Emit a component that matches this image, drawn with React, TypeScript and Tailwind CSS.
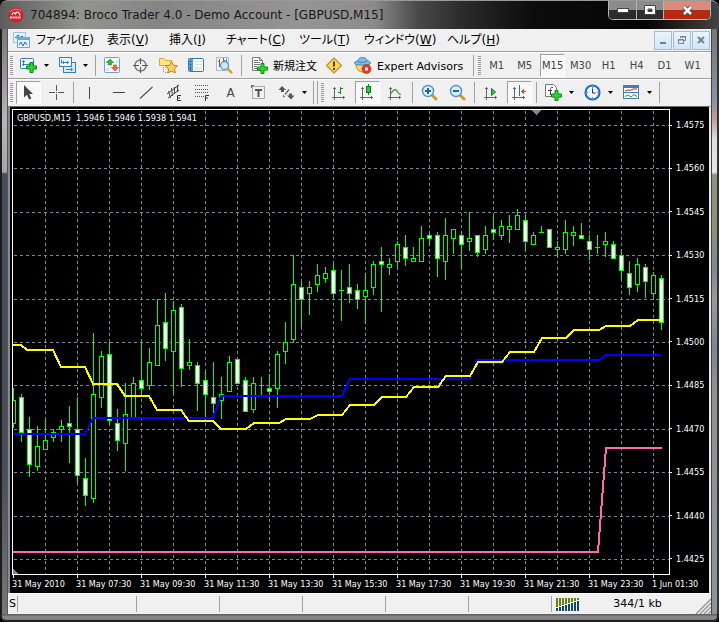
import type { ReactNode } from "react";

// [high, body top, body bottom, low, filled] in chart rows, one entry per 15 minutes
type Candle = [number, number, number, number, 0 | 1];

const candles: Candle[] = [
  [388, 400, 423, 427, 0], [394, 397, 432, 441, 1], [417, 429, 464, 476, 1], [426, 446, 466, 470, 0],
  [420, 440, 449, 449, 0], [429, 432, 437, 441, 0], [420, 426, 429, 441, 0], [406, 423, 426, 462, 1],
  [397, 429, 475, 482, 1], [458, 478, 495, 505, 1], [333, 394, 498, 502, 0], [351, 356, 397, 407, 0],
  [342, 354, 420, 424, 1], [409, 423, 440, 450, 1], [383, 414, 443, 470, 0], [377, 383, 417, 417, 0],
  [342, 380, 388, 395, 1], [348, 362, 385, 389, 0], [299, 325, 365, 365, 0], [293, 322, 348, 360, 1],
  [301, 310, 351, 392, 0], [304, 307, 368, 386, 1], [339, 362, 365, 369, 0], [362, 365, 383, 410, 1],
  [371, 380, 394, 417, 1], [362, 397, 403, 412, 1], [377, 394, 400, 418, 0], [356, 362, 391, 391, 0],
  [359, 359, 383, 383, 1], [377, 380, 411, 411, 1], [377, 383, 409, 412, 0], [377, 385, 385, 395, 0],
  [374, 388, 391, 400, 1], [351, 354, 388, 407, 0], [322, 342, 351, 363, 0], [255, 284, 339, 342, 0],
  [281, 287, 299, 326, 1], [281, 287, 293, 314, 0], [264, 275, 284, 291, 0], [267, 273, 278, 282, 0],
  [264, 270, 293, 297, 1], [270, 290, 290, 320, 0], [264, 287, 293, 302, 1], [284, 290, 299, 308, 1],
  [273, 290, 296, 323, 0], [261, 264, 287, 294, 0], [247, 261, 264, 311, 1], [258, 264, 267, 274, 0],
  [241, 244, 261, 268, 0], [235, 247, 258, 265, 1], [247, 258, 261, 261, 0], [226, 238, 261, 261, 0],
  [232, 235, 238, 245, 1], [232, 235, 258, 276, 1], [218, 235, 261, 279, 0], [229, 229, 238, 253, 0],
  [232, 235, 244, 268, 1], [212, 238, 241, 250, 0], [235, 235, 252, 256, 1], [226, 235, 249, 253, 0],
  [215, 229, 232, 239, 1], [220, 226, 235, 239, 0], [215, 226, 229, 242, 0], [209, 215, 229, 229, 0],
  [215, 220, 241, 250, 1], [232, 235, 244, 244, 0], [226, 232, 232, 232, 0], [229, 229, 247, 247, 1],
  [241, 247, 249, 256, 0], [220, 232, 249, 253, 0], [226, 232, 235, 245, 0], [223, 235, 238, 238, 1],
  [235, 241, 249, 259, 1], [235, 247, 247, 253, 0], [232, 241, 244, 256, 0], [241, 244, 258, 258, 1],
  [249, 255, 270, 279, 1], [261, 273, 287, 294, 1], [258, 264, 284, 291, 0], [264, 267, 281, 297, 1],
  [272, 275, 293, 297, 0], [275, 278, 322, 329, 1],
];

const gridRows = [125, 168, 212, 255, 299, 342, 385, 429, 472, 516, 559];
const gridCols = Array.from({ length: 20 }, (_, i) => 45 + i * 32);

const prices = ["1.4575", "1.4560", "1.4545", "1.4530", "1.4515", "1.4500", "1.4485", "1.4470", "1.4455", "1.4440", "1.4425"];
const times = [
  "31 May 2010", "31 May 07:30", "31 May 09:30", "31 May 11:30", "31 May 13:30", "31 May 15:30",
  "31 May 17:30", "31 May 19:30", "31 May 21:30", "31 May 23:30", "1 Jun 01:30",
];

const yellow =
  "13,345 21,345 27,350 53,350 61,367 85,367 93,384 117,384 125,396 149,396 157,410 181,410 189,421 213,421 221,429 246,429 254,423 279,423 286,419 310,419 318,415 342,415 350,405 374,405 382,397 406,397 414,387 438,387 446,376 470,376 478,362 502,362 510,352 534,352 542,338 566,338 574,330 599,330 606,326 630,326 638,320 661,320";
const blue =
  "13,434 85,434 93,418 213,418 221,396 342,396 350,379 470,379 477,360 599,360 606,355 661,355";
const pink = "13,552 598,552 606,448 662,448";

function Chart() {
  return (
    <svg viewBox="13 110 656 464" className="block w-full" shapeRendering="crispEdges" aria-label="GBPUSD candles">
      <g stroke="#778899" strokeWidth="1" strokeDasharray="3 3">
        {gridRows.map((y) => <path key={y} d={`M14 ${y + 0.5}H669`} />)}
        {gridCols.map((x) => <path key={x} d={`M${x + 0.5} 111V574`} />)}
      </g>
      {candles.map(([high, top, bottom, low, filled], i) => {
        const x = 13 + i * 8;
        return (
          <g key={x} stroke="#00ff00" strokeWidth="1">
            <path d={`M${x + 0.5} ${high}V${low + 1}`} />
            {top === bottom ? (
              <path d={`M${x - 2} ${top + 0.5}h5`} />
            ) : (
              <rect x={x - 1.5} y={top + 0.5} width="4" height={bottom - top} fill={filled ? "#ffffff" : "#000000"} />
            )}
          </g>
        );
      })}
      <g fill="none" strokeWidth="2" strokeLinejoin="round">
        <polyline points={blue} stroke="#0000ff" />
        <polyline points={yellow} stroke="#ffff00" />
        <polyline points={pink} stroke="#ff69b4" />
      </g>
      <path d="M532 110h9l-4.500 5z" fill="#778899" />
      <path d="M13 569v5h5z" fill="#778899" />
    </svg>
  );
}

function Icon({ children, w = 17 }: { children: ReactNode; w?: number }) {
  return (
    <svg width={w} height="17" viewBox={`0 0 ${w} 17`} fill="none" className="shrink-0 overflow-visible" aria-hidden="true">
      {children}
    </svg>
  );
}

const Plus = ({ x, y }: { x: number; y: number }) => (
  <path
    transform={`translate(${x} ${y})`}
    d="M4 .5h3v3.500h3.500v3H7v3.500H4V7H.5V4H4z"
    fill="#2fd62f"
    stroke="#0b8a12"
  />
);

const Axes = () => (
  <path d="M3.500 3v13M1 13.500h13M2 4.500h3M12.500 12v3" stroke="#666" />
);

const icons = {
  chartLogo: (
    <Icon>
      <rect x=".5" y=".5" width="12" height="10" fill="#e4f2fd" stroke="#9cc4e4" />
      <path d="M2 5.500h2v-2h2v4h2v-3h2" stroke="#3778b0" />
      <rect x="4.500" y="5.500" width="12" height="10" fill="#e4f2fd" stroke="#6fa8d6" />
      <path d="M4.500 7h12" stroke="#6fa8d6" strokeWidth="2" />
      <path d="M6 13l2-3 2 4 2-4 2 3" stroke="#2a6ea8" />
    </Icon>
  ),
  newChart: (
    <Icon>
      <rect x=".5" y="1.500" width="13" height="10" rx="1" fill="#eef7fe" stroke="#3b7fb5" />
      <path d="M3.500 3v6M2 7.500h9M2 4.500h3M9.500 6v3" stroke="#4a7fa8" />
      <Plus x={6} y={5} />
    </Icon>
  ),
  profiles: (
    <Icon>
      <rect x="4.500" y="5.500" width="12" height="10" fill="#d7eafa" stroke="#3b7fb5" />
      <path d="M7 12.500h7M12.500 11v3" stroke="#4a7fa8" />
      <rect x=".5" y=".5" width="12" height="9" fill="#eef7fe" stroke="#3b7fb5" />
      <path d="M2.500 2.500v4M2 5.500h8M4.500 4v3M8.500 4v3" stroke="#4a7fa8" />
    </Icon>
  ),
  market: (
    <Icon>
      <rect x=".5" y=".5" width="15" height="15" rx="1" fill="#f4faff" stroke="#69a2d0" />
      <path d="M2 4.500h2M2 7.500h2M12 4.500h2M2 11.500h4M2 13.500h3" stroke="#c7ddee" />
      <path d="M6 2l3.500 3.500H7.500V8h-3V5.500h-2z" fill="#35b832" stroke="#168018" strokeWidth=".6" />
      <path d="M11 14l-3.500-3.500h2V8h3v2.500h2z" fill="#ff6a3c" stroke="#c7340f" strokeWidth=".6" />
    </Icon>
  ),
  crosshair: (
    <Icon>
      <circle cx="8.500" cy="8.500" r="5.500" stroke="#777" strokeWidth="1.400" />
      <path d="M8.500 1v6M8.500 10v6M1 8.500h6M10 8.500h6" stroke="#555" />
    </Icon>
  ),
  favorites: (
    <Icon w={19}>
      <path d="M.5 8.500v-7h4.500l1.500 2h6v5z" fill="#ffe789" stroke="#d2a93a" />
      <path d="M4.500 10v6M6 15.500h3" stroke="#888" strokeDasharray="1 1" />
      <path d="M12.500 4.500l1.900 3.800 4.100.6-3 2.900.7 4.200-3.700-2-3.700 2 .7-4.200-3-2.900 4.100-.6z" fill="#ffd25a" stroke="#b8831a" />
    </Icon>
  ),
  navigator: (
    <Icon>
      <rect x=".5" y="1.500" width="15" height="13" rx="1" fill="#fff" stroke="#2f78b7" />
      <path d="M1 2h4v12H1z" fill="#5a9bd0" />
      <path d="M2 4.500h1M2 7.500h1M2 10.500h1M2 12.500h1" stroke="#123c60" />
      <path d="M7 4.500h7M7 7.500h7M7 10.500h7M7 12.500h7" stroke="#d3e3ef" />
    </Icon>
  ),
  search: (
    <Icon>
      <rect x=".5" y=".5" width="12" height="13" fill="#f4f4f4" stroke="#b9b9b9" />
      <path d="M3.500 2v8M7.500 1v5M10.500 2v5M2 4.500h1M7 3.500h2" stroke="#666" />
      <circle cx="8.500" cy="8.500" r="4" fill="#c5e3f8" fillOpacity=".85" stroke="#5a9bd0" strokeWidth="1.300" />
      <path d="M12 12l3.500 3.500" stroke="#d59b25" strokeWidth="2.400" strokeLinecap="round" />
    </Icon>
  ),
  newOrder: (
    <Icon w={16}>
      <path d="M.5.5h7l3 3v10H.5z" fill="#fff" stroke="#777" />
      <path d="M7.500.5v3h3" stroke="#777" />
      <path d="M2 3.500h4M2 5.500h6M2 7.500h6M2 9.500h3M2 11.500h3" stroke="#777" />
      <Plus x={5} y={6} />
    </Icon>
  ),
  warning: (
    <Icon>
      <path d="M8 1L15.500 8.500 8 16 .5 8.500z" fill="#fbd65a" stroke="#b99534" strokeWidth="1.200" strokeLinejoin="round" />
      <path d="M8 4.500v5M8 11v2" stroke="#5c4407" strokeWidth="2" />
    </Icon>
  ),
  expert: (
    <Icon w={18}>
      <path d="M2 7c0 5 3 8 6.500 8S15 12 15 7z" fill="#f7d566" stroke="#b8862b" />
      <path d="M.5 6c0-1.500 2-2 3.500-2C4 1.500 6 .5 8.500.5s4 1 4.500 3c1.500.5 3.500 1 3.500 2.500C16.500 7.500 12 8 8.500 8S.5 7.500.5 6z" fill="#7cbfec" stroke="#4688ba" />
      <path d="M4 4.500c2.500 1.500 6.500 1 9-.500" stroke="#3b7bab" />
      <circle cx="12.500" cy="12" r="4.500" fill="#e23b22" stroke="#b32611" strokeWidth=".6" />
      <path d="M11 10.500h3v3h-3z" fill="#fff" />
    </Icon>
  ),
  cursor: (
    <Icon>
      <path d="M4 1v12.500l3-2.700 2 4.700 2.300-1-2-4.500H13z" fill="#444" />
    </Icon>
  ),
  cross: (
    <Icon>
      <path d="M8.500 1v6M8.500 10v6M1 8.500h6M10 8.500h6M8 8.500h1" stroke="#555" />
    </Icon>
  ),
  vline: <Icon><path d="M7.500 3v12" stroke="#444" /></Icon>,
  hline: <Icon><path d="M3 8.500h12" stroke="#444" /></Icon>,
  trend: <Icon><path d="M2 14.500L14.500 3" stroke="#555" strokeWidth="1.200" /></Icon>,
  channel: (
    <Icon>
      <path d="M1 10L13 1M2 14L13 6M2.500 7l2 7M5.500 4l1 8M8.500 3v7M11.500 1v7" stroke="#444" />
      <path d="M15 11.500h-3.500v5H15M11.500 14H14" stroke="#333" />
    </Icon>
  ),
  fib: (
    <Icon>
      <path d="M1 1.500h14M1 5.500h14M1 8.500h14M1 12.500h9" stroke="#555" strokeDasharray="1 1" />
      <path d="M15 11.500h-3.500V17M11.500 14H14" stroke="#333" />
    </Icon>
  ),
  label: (
    <Icon>
      <rect x="2.500" y="2.500" width="12" height="12" stroke="#666" strokeDasharray="1 1" />
      <path d="M1 1.500h3M1.500 1v3" stroke="#666" />
      <path d="M5 6h7M8.500 6v7" stroke="#555" strokeWidth="2" />
    </Icon>
  ),
  arrows: (
    <Icon>
      <path d="M4 2l4 4H6v2H3V6H.5z" fill="#555" />
      <path d="M13 15.500l-4-4h2v-2h3v2h2.500z" fill="#555" />
      <path d="M5 11.500l1.500 1.500M7 10.500l4-5" stroke="#666" strokeWidth="1.400" />
    </Icon>
  ),
  bars: (
    <Icon>
      <Axes />
      <path d="M9.500 3v7M7 8.500h2M10 4.500h2" stroke="#18831b" />
    </Icon>
  ),
  candle: (
    <Icon>
      <Axes />
      <path d="M9.500 0v11" stroke="#0c7d12" />
      <rect x="7.500" y="2.500" width="4" height="6" fill="#2bd035" stroke="#0c7d12" />
    </Icon>
  ),
  line: (
    <Icon>
      <Axes />
      <path d="M4 9.500c3-5 5-5 7-1 .6 1 2 2 3 2" stroke="#2c9a35" strokeWidth="1.200" />
    </Icon>
  ),
  zoomIn: (
    <Icon>
      <path d="M11 11l4 4" stroke="#cf9a28" strokeWidth="3" strokeLinecap="round" />
      <circle cx="7" cy="7" r="5.500" fill="#dff1fd" stroke="#4c93cb" strokeWidth="1.400" />
      <path d="M4 7h6M7 4v6" stroke="#22659d" strokeWidth="2" />
    </Icon>
  ),
  zoomOut: (
    <Icon>
      <path d="M11 11l4 4" stroke="#cf9a28" strokeWidth="3" strokeLinecap="round" />
      <circle cx="7" cy="7" r="5.500" fill="#dff1fd" stroke="#4c93cb" strokeWidth="1.400" />
      <path d="M4 7h6" stroke="#22659d" strokeWidth="2" />
    </Icon>
  ),
  scroll: (
    <Icon>
      <Axes />
      <path d="M8.500 4.500l4 3.500-4 3.500z" fill="#2bc935" stroke="#0c7d12" />
    </Icon>
  ),
  shift: (
    <Icon>
      <Axes />
      <path d="M8.500 1v11" stroke="#2d6f9f" />
      <path d="M15 7.500h-4M12.500 5.500l-2 2 2 2z" fill="#d8431c" stroke="#d8431c" />
    </Icon>
  ),
  indicators: (
    <Icon>
      <path d="M.5.5h8l3 3v9H.5z" fill="#fff" stroke="#777" />
      <path d="M8 3.500c-2-1-2.500.5-2.500 2V11M3 6.500h4" stroke="#444" />
      <Plus x={6} y={6} />
    </Icon>
  ),
  clock: (
    <Icon>
      <circle cx="8.500" cy="8.500" r="7" fill="#f2f7fb" stroke="#2374c2" strokeWidth="2.200" />
      <path d="M8.500 4.500v4.500h3" stroke="#333" />
      <path d="M8.500 3v1M8.500 13v1M3 8.500h1M13 8.500h1" stroke="#777" />
    </Icon>
  ),
  template: (
    <Icon>
      <rect x=".5" y="1.500" width="15" height="13" fill="#fff" stroke="#3c80b7" />
      <path d="M0 3h16" stroke="#3c80b7" strokeWidth="2" />
      <path d="M1 8.500h14" stroke="#3c80b7" />
      <path d="M2 7l3-1 2 .5 3-1.500h4" stroke="#b2331c" />
      <path d="M2 12.500l3-1.500 3 2 3-2.500 3 2" stroke="#2e9a3a" />
    </Icon>
  ),
};

function Tool({ name, icon, active }: { name: string; icon?: ReactNode; active?: boolean }) {
  return (
    <button
      type="button"
      aria-label={name}
      aria-pressed={active}
      className={
        active
          ? "flex h-[23px] w-[25px] shrink-0 items-center justify-center border border-t-[#a0a0a0] border-r-white border-b-white border-l-[#a0a0a0] bg-[#f8f8f8] text-[10px] text-[#444]"
          : "flex h-[23px] w-[25px] shrink-0 items-center justify-center text-[10px] text-[#444]"
      }
    >
      {icon ?? name}
    </button>
  );
}

function Caret({ name }: { name: string }) {
  return (
    <button type="button" aria-label={name} className="flex h-[23px] w-[11px] shrink-0 items-center justify-center">
      <svg width="5" height="3" viewBox="0 0 5 3" aria-hidden="true">
        <path d="M0 0h5L2.500 3z" fill="#000" />
      </svg>
    </button>
  );
}

const Split = () => <span className="h-[23px] w-px shrink-0 bg-[#a0a0a0]" />;

const Sep = () => <span className="mx-px h-[21px] w-px shrink-0 bg-[#a0a0a0]" />;

const Grip = () => (
  <svg width="3" height="19" viewBox="0 0 3 19" className="shrink-0" aria-hidden="true">
    <path d="M1.500 0v19" stroke="#999" strokeWidth="3" strokeDasharray="1 1" />
  </svg>
);

const menus = [
  { text: "ファイル", key: "F", width: "w-[71px]" },
  { text: "表示", key: "V", width: "w-[62px]" },
  { text: "挿入", key: "I", width: "w-[57px]" },
  { text: "チャート", key: "C", width: "w-[73px]" },
  { text: "ツール", key: "T", width: "w-[65px]" },
  { text: "ウィンドウ", key: "W", width: "w-[83px]" },
  { text: "ヘルプ", key: "H", width: "w-[66px]" },
];

const timeframes = ["M1", "M5", "M15", "M30", "H1", "H4", "D1", "W1"];

function TitleBar() {
  return (
    <header className="flex h-[29px] items-start rounded-t-lg border-t border-[#9a9a9a] bg-[linear-gradient(90deg,#5c5c5c_0%,#93938f_11%,#858585_22%,#959595_42%,#8c8c8c_52%,#4a4a4a_58%,#2c2c2c_64%,#0c0c0c_74%,#050505_90%,#444_100%)] pr-2 pl-2">
      <div className="flex h-7 min-w-0 flex-1 items-center gap-1.5">
        <svg width="16" height="16" viewBox="0 0 16 16" className="shrink-0" aria-hidden="true">
          <circle cx="8" cy="8" r="7.500" fill="#d3202c" />
          <path d="M2 5c2-3 8-4 11-1" stroke="#f08a8a" fill="none" />
          <path d="M4 8c.5-3 2.500-3.500 3.500-.5C8 4 11 4 12 8.500" stroke="#fff" strokeWidth="1.200" fill="none" />
          <path d="M2 10.500h11" stroke="#ffd0d0" strokeWidth="2" strokeDasharray="2 .6" fill="none" />
        </svg>
        <h1 className="truncate text-xs text-[#16161c]">704894: Broco Trader 4.0 - Demo Account - [GBPUSD,M15]</h1>
      </div>
      <div className="flex h-[19px] shrink-0 overflow-hidden rounded-b-[5px] border border-t-0 border-[#b4b4b4]">
        <button type="button" aria-label="Minimize" className="flex w-7 items-center justify-center border-r border-[#b4b4b4] bg-linear-to-b from-[#8b8b8b] from-50% to-[#2c2c2c] to-50%">
          <svg width="12" height="6" viewBox="0 0 12 6"><rect x=".5" y="1.500" width="11" height="4" fill="#fff" stroke="#444" /></svg>
        </button>
        <button type="button" aria-label="Maximize" className="flex w-[27px] items-center justify-center border-r border-[#b4b4b4] bg-linear-to-b from-[#8b8b8b] from-50% to-[#2c2c2c] to-50%">
          <svg width="12" height="10" viewBox="0 0 12 10"><path fillRule="evenodd" d="M.5.5h11v9H.5zM4 4v2.500h4V4z" fill="#fff" stroke="#444" /></svg>
        </button>
        <button type="button" aria-label="Close" className="flex w-[46px] items-center justify-center bg-linear-to-b from-[#d98b7c] from-50% to-[#b22a12] to-50%">
          <svg width="13" height="11" viewBox="0 0 13 11"><path d="M3 2l7 7M10 2L3 9" stroke="#444" strokeWidth="4" /><path d="M3 2l7 7M10 2L3 9" stroke="#fff" strokeWidth="2.600" /></svg>
        </button>
      </div>
    </header>
  );
}

const mdiButton = "flex h-[19px] w-[18px] items-center justify-center border border-[#a9bccd] bg-linear-to-b from-[#eaf4fd] to-[#d3e5f5]";

function MenuBar() {
  return (
    <nav className="flex h-[23px] items-center border-b border-[#a0a0a0] pr-px pl-[5px]">
      {icons.chartLogo}
      <div className="flex min-w-0 flex-1 pl-1.5 text-xs [font-feature-settings:'palt']">
        {menus.map((m) => (
          <button key={m.key} type="button" className={`${m.width} shrink-0 text-left whitespace-nowrap`}>
            {m.text}(<u>{m.key}</u>)
          </button>
        ))}
      </div>
      <div className="flex shrink-0 gap-px">
        <button type="button" aria-label="Minimize chart" className={mdiButton}>
          <svg width="10" height="10" viewBox="0 0 10 10"><path d="M2 8h6" stroke="#6d8296" strokeWidth="2" /></svg>
        </button>
        <button type="button" aria-label="Restore chart" className={mdiButton}>
          <svg width="10" height="10" viewBox="0 0 10 10" fill="none" stroke="#6d8296"><path d="M3.500 3V1.500h5v4H7M3.500 2h5M1.500 4.500h5v4h-5zM1.500 5h5" /></svg>
        </button>
        <button type="button" aria-label="Close chart" className={mdiButton}>
          <svg width="10" height="10" viewBox="0 0 10 10"><path d="M2 2l6 6M8 2L2 8" stroke="#6d8296" strokeWidth="2" /></svg>
        </button>
      </div>
    </nav>
  );
}

function Toolbars() {
  return (
    <>
      <div className="flex h-[27px] items-center gap-[3px] overflow-hidden border-t border-b border-t-white border-b-[#a0a0a0] pl-0.5">
        <Grip />
        <div className="flex">
          <Tool name="New chart" icon={icons.newChart} />
          <Caret name="New chart list" />
        </div>
        <div className="flex">
          <Tool name="Profiles" icon={icons.profiles} />
          <Caret name="Profile list" />
        </div>
        <Sep />
        <Tool name="Market watch" icon={icons.market} />
        <Tool name="Data window" icon={icons.crosshair} />
        <Tool name="Navigator" icon={icons.favorites} />
        <Tool name="Terminal" icon={icons.navigator} />
        <Tool name="Strategy tester" icon={icons.search} />
        <Sep />
        <button type="button" className="flex h-[23px] shrink-0 items-center gap-[5px] pr-0.5 pl-1.5 text-[11px]">
          {icons.newOrder}
          <span className="pt-1">新規注文</span>
        </button>
        <Tool name="MetaEditor" icon={icons.warning} />
        <button type="button" className="flex h-[23px] shrink-0 items-center gap-[5px] pr-1.5 pl-1 text-[11px]">
          {icons.expert}
          <span className="pt-1">Expert Advisors</span>
        </button>
        <Sep />
        <Grip />
        {timeframes.map((t) => (
          <Tool key={t} name={t} active={t === "M15"} />
        ))}
      </div>
      <div className="flex h-[27px] items-center gap-[3px] overflow-hidden border-t border-b border-t-white border-b-[#f0f0f0] pl-0.5">
        <Grip />
        <Tool name="Cursor" icon={icons.cursor} active />
        <Tool name="Crosshair" icon={icons.cross} />
        <Sep />
        <Tool name="Vertical line" icon={icons.vline} />
        <Tool name="Horizontal line" icon={icons.hline} />
        <Tool name="Trendline" icon={icons.trend} />
        <Tool name="Equidistant channel" icon={icons.channel} />
        <Tool name="Fibonacci retracement" icon={icons.fib} />
        <Tool name="Text" icon={<span className="text-xs">A</span>} />
        <Tool name="Text label" icon={icons.label} />
        <div className="flex">
          <Tool name="Arrows" icon={icons.arrows} />
          <Caret name="Arrow list" />
        </div>
        <Split />
        <Split />
        <Grip />
        <Tool name="Bar chart" icon={icons.bars} />
        <Tool name="Candlesticks" icon={icons.candle} active />
        <Tool name="Line chart" icon={icons.line} />
        <Sep />
        <Tool name="Zoom in" icon={icons.zoomIn} />
        <Tool name="Zoom out" icon={icons.zoomOut} />
        <Sep />
        <Tool name="Auto scroll" icon={icons.scroll} />
        <Tool name="Chart shift" icon={icons.shift} active />
        <Sep />
        <div className="flex">
          <Tool name="Indicators" icon={icons.indicators} />
          <Caret name="Indicator list" />
        </div>
        <div className="flex">
          <Tool name="Periods" icon={icons.clock} />
          <Caret name="Period list" />
        </div>
        <div className="flex">
          <Tool name="Templates" icon={icons.template} />
          <Caret name="Template list" />
        </div>
        <Sep />
      </div>
    </>
  );
}

function ChartWindow() {
  return (
    <section className="border-t border-r-2 border-l-2 border-t-[#6c6c6c] border-r-[#e8e8e8] border-l-[#8a8a8a] bg-black pt-0.5 pl-0.5 font-['DejaVu_Sans_Condensed','Noto_Sans',sans-serif] text-[9px] leading-3 text-white">
      <div className="flex">
        <div className="relative min-w-0 flex-1 border border-white">
          <Chart />
          <p className="absolute top-0.5 left-1 bg-black whitespace-pre">GBPUSD,M15  1.5946 1.5946 1.5938 1.5941</p>
        </div>
        <div className="flex w-[39px] flex-col justify-between py-[10px]">
          {prices.map((p) => (
            <span key={p} className="flex items-center gap-1">
              <i className="h-px w-0.5 bg-white" />
              {p}
            </span>
          ))}
        </div>
      </div>
      <div className="flex h-[18px] overflow-hidden">
        {times.map((t) => (
          <span key={t} className="w-16 shrink-0 whitespace-nowrap">
            <i className="ml-px block h-[3px] w-px bg-white" />
            {t}
          </span>
        ))}
      </div>
    </section>
  );
}

function StatusBar() {
  const cell = "h-4 w-[83px] border-r border-[#a0a0a0]";
  return (
    <footer className="flex h-[21px] items-center overflow-hidden border-t border-white text-[11px]">
      <span className="h-4 w-2.5 overflow-hidden border-r border-[#a0a0a0] pl-px leading-4">S</span>
      <span className="h-4 w-[119px] border-r border-[#a0a0a0]" />
      <span className={cell} />
      <span className={cell} />
      <span className={cell} />
      <span className={cell} />
      <span className="h-4 min-w-0 flex-1 border-r border-[#a0a0a0]" />
      <svg width="24" height="13" viewBox="0 0 24 13" className="ml-1 shrink-0" shapeRendering="crispEdges" aria-hidden="true">
        {[10, 9, 8, 7, 6, 5, 4, 3].map((h, i) => (
          <g key={h}>
            <rect x={i * 3} y="0" width="2" height={h - 1} fill="#5f8013" />
            <rect x={i * 3} y={h} width="2" height={13 - h} fill="#12466b" />
          </g>
        ))}
      </svg>
      <span className="w-[115px] shrink-0 text-center">344/1 kb</span>
      <svg width="16" height="16" viewBox="0 0 16 16" className="shrink-0 self-end" aria-hidden="true">
        <path d="M1 16L16 1M5 16L16 5M9 16l7-7M13 16l3-3" stroke="#999" strokeWidth="1.500" />
      </svg>
    </footer>
  );
}

export default function App() {
  return (
    <main className="min-h-screen bg-black font-['DejaVu_Sans','Noto_Sans_CJK_JP',sans-serif] text-black">
      <TitleBar />
      <div className="flex">
        <div className="w-2 shrink-0 border-r border-l-2 border-r-[#555] border-l-[#1c1c1c] bg-[linear-gradient(180deg,#777_0,#b9b4ba_90px,#a8a4aa_143px,#454c5b_145px,#454c5b_440px,#777_100%)]" />
        <div className="min-w-0 flex-1 bg-[#f0f0f0]">
          <MenuBar />
          <Toolbars />
          <ChartWindow />
          <StatusBar />
        </div>
        <div className="w-2 shrink-0 border-r-2 border-l border-r-[#333] border-l-[#444] bg-[linear-gradient(180deg,#777_0,#8791a8_70px,#c49a96_90px,#ddd_110px,#e6e6e6_143px,#8d9180_146px,#8b9278_200px,#7f869b_240px,#999_270px,#7a8598_320px,#919191_360px,#8c93a0_100%)]" />
      </div>
      <div className="h-2 rounded-b-md border-x-2 border-b-2 border-[#222] bg-linear-to-b from-[#555] via-[#909090] to-[#777]" />
    </main>
  );
}
